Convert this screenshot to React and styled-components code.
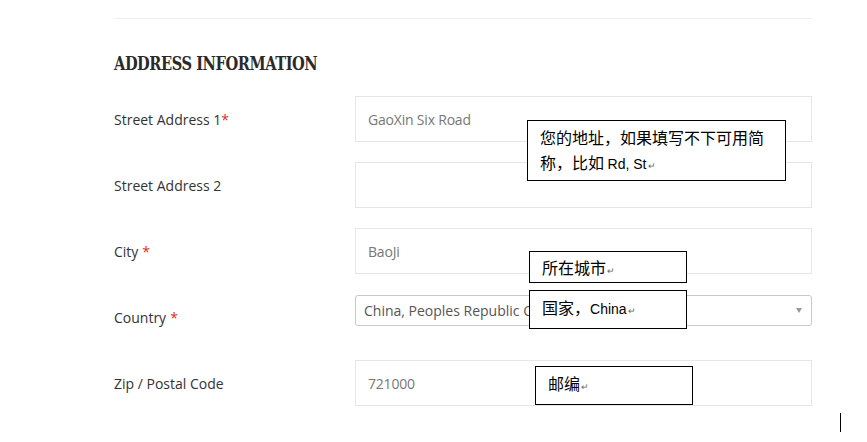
import React from 'react';
import styled, { createGlobalStyle } from 'styled-components';

const GlobalStyle = createGlobalStyle`
  html, body {
    margin: 0;
    padding: 0;
    background: #fff;
  }
  body {
    font-family: "Open Sans", "Liberation Sans", sans-serif;
  }
`;

const Page = styled.div`
  position: relative;
  width: 867px;
  height: 442px;
  overflow: hidden;
  background: #fff;
`;

const Section = styled.div`
  margin-left: 114px;
  width: 698px;
  padding-top: 18px;
`;

const Divider = styled.div`
  height: 1px;
  background: #eeeeee;
`;

const Heading = styled.h2`
  display: inline-block;
  margin: 33px 0 22px;
  font-family: "DejaVu Serif", "Liberation Serif", serif;
  font-weight: bold;
  font-size: 19px;
  line-height: 22px;
  color: #2a2a2a;
  letter-spacing: -0.6px;
  transform: scaleX(0.77);
  transform-origin: 0 50%;
  white-space: nowrap;
`;

const Row = styled.div`
  display: flex;
  align-items: center;
  height: 46px;
  margin-bottom: 20px;
`;

const Label = styled.label`
  width: 241px;
  flex-shrink: 0;
  font-size: 14px;
  color: #333;
`;

const Star = styled.span`
  color: #e02b27;
  margin-left: ${(p) => (p.$gap ? '4px' : '0')};
`;

const Input = styled.div`
  box-sizing: border-box;
  flex: 1;
  height: 46px;
  border: 1px solid #e6e6e6;
  padding: 0 12px;
  display: flex;
  align-items: center;
  font-size: 14px;
  color: #777;
  letter-spacing: -0.2px;
`;

const Select = styled.div`
  box-sizing: border-box;
  flex: 1;
  align-self: flex-start;
  margin-top: 1px;
  height: 31px;
  border: 1px solid #c8c8c8;
  border-radius: 3px;
  padding: 0 8px;
  display: flex;
  align-items: center;
  justify-content: space-between;
  font-size: 14px;
  color: #555;
`;

const Arrow = styled.span`
  width: 0;
  height: 0;
  border-left: 3px solid transparent;
  border-right: 3px solid transparent;
  border-top: 5px solid #999;
  margin-right: 1px;
`;

const Note = styled.div`
  position: absolute;
  box-sizing: border-box;
  left: ${(p) => p.$x}px;
  top: ${(p) => p.$y}px;
  width: ${(p) => p.$w}px;
  height: ${(p) => p.$h}px;
  border: 1px solid #000;
  background: #fff;
  padding: ${(p) => p.$pt || 4}px 0 0 12px;
  font-family: "Noto Sans CJK SC", "Liberation Sans", sans-serif;
  font-size: 16px;
  line-height: 25px;
  color: #000;
`;

const Latin = styled.span`
  font-family: "Liberation Sans", sans-serif;
  font-size: 14px;
`;

const Ret = styled.span`
  font-size: 9px;
  color: #666;
  margin-left: 1px;
`;

const Cursor = styled.div`
  position: absolute;
  left: 840px;
  top: 413px;
  width: 1px;
  height: 19px;
  background: #000;
`;

const App = () => {
  return (
    <Page>
      <GlobalStyle />
      <Section>
        <Divider />
        <Heading>ADDRESS INFORMATION</Heading>
        <Row>
          <Label>
            Street Address 1<Star>*</Star>
          </Label>
          <Input>GaoXin Six Road</Input>
        </Row>
        <Row>
          <Label>Street Address 2</Label>
          <Input />
        </Row>
        <Row>
          <Label>
            City<Star $gap>*</Star>
          </Label>
          <Input>BaoJi</Input>
        </Row>
        <Row>
          <Label>
            Country<Star $gap>*</Star>
          </Label>
          <Select>
            <span>China, Peoples Republic Of</span>
            <Arrow />
          </Select>
        </Row>
        <Row>
          <Label>Zip / Postal Code</Label>
          <Input>721000</Input>
        </Row>
      </Section>

      <Note $x={527} $y={120} $w={259} $h={61} $pt={4}>
        您的地址，如果填写不下可用简
        <br />
        称，比如 <Latin>Rd, St</Latin>
        <Ret>↵</Ret>
      </Note>
      <Note $x={529} $y={251} $w={158} $h={32} $pt={3}>
        所在城市<Ret>↵</Ret>
      </Note>
      <Note $x={529} $y={290} $w={158} $h={39} $pt={4}>
        国家，<Latin>China</Latin>
        <Ret>↵</Ret>
      </Note>
      <Note $x={535} $y={366} $w={158} $h={39} $pt={4}>
        邮编<Ret>↵</Ret>
      </Note>
      <Cursor />
    </Page>
  );
};

export default App;
